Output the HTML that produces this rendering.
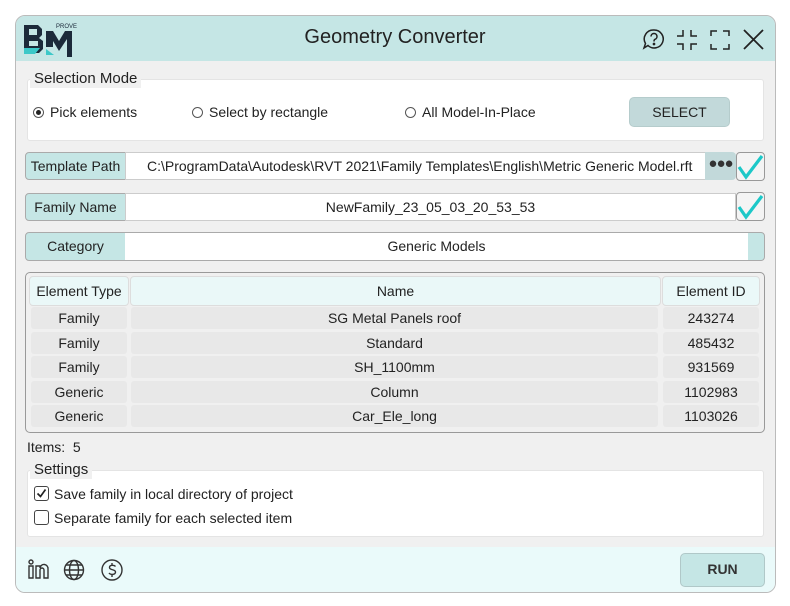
<!DOCTYPE html>
<html><head><style>
*{box-sizing:border-box;margin:0;padding:0}
body{width:790px;height:606px;background:#fff;font-family:"Liberation Sans","DejaVu Sans",sans-serif;font-size:14px;color:#222;position:relative;overflow:hidden}
.a{position:absolute}
.win{left:15px;top:15px;width:761px;height:578px;border:1px solid #bbb;border-radius:10px;background:#f0f0f0;overflow:hidden}
.hdr{left:0;top:0;width:100%;height:45px;background:#c5e6e5}
.ftr{left:0;top:531px;width:100%;height:47px;background:#eafafa}
.box{background:#fff;border:1px solid #e4e4e4;border-radius:3px}
.lbl{background:#c5e6e5;border:1px solid #aaa;border-radius:4px 0 0 4px;text-align:center;line-height:26px;font-size:14px}
.tb{background:#fff;border:1px solid #ccc;text-align:center;line-height:26px;font-size:14px;white-space:nowrap;overflow:hidden}
.chk{background:#f4f4f4;border:1px solid #999;border-radius:4px}
.cell{background:#e8e8e8;border-radius:3px;text-align:center;line-height:22px;font-size:14px}
.hc{background:#eaf8f8;border:1px solid #ddd;border-radius:4px;text-align:center;line-height:28px;font-size:14px}
.radio{width:11px;height:11px;border:1px solid #555;border-radius:50%;background:#fff}
</style></head><body>
<div class="a win">
 <div class="a hdr"></div>
 <div class="a ftr"></div>
</div>
<!-- logo -->
<svg class="a" style="left:22px;top:20px" width="58" height="38" viewBox="0 0 58 38">
 <path d="M2 5h14l4 4v6l-3 3 4 3v8l-4 4H2z" fill="#1c2a3a"/>
 <path d="M7 9h8v6H7zM7 21h9v5H7z" fill="#c5e6e5"/>
 <path d="M2 28h16l-5 6H2z" fill="#3cc8c8"/>
 <path d="M24 11h7l6 10 6-10h7v26h-5V19l-8 12-6-10v6h-7z" fill="#1c2a3a"/>
 <path d="M24 29l8 6h-8z" fill="#3cc8c8"/>
 <text x="34" y="8" font-size="6" fill="#1c2a3a" font-family="Liberation Sans">PROVE</text>
</svg>
<div class="a" style="left:0;width:790px;top:26px;text-align:center;font-size:20px;color:#222">Geometry Converter</div>
<!-- header icons -->
<svg class="a" style="left:642px;top:27px" width="125" height="26" viewBox="0 0 125 26">
 <g fill="none" stroke="#222" stroke-width="1.5">
  <path d="M12 3a9 9 0 1 1-6 15.5L2 21l1.5-4.5A9 9 0 0 1 12 3z"/>
  <path d="M9 9.5a3 3 0 1 1 4 2.8c-1 .4-1 1.2-1 2.2"/><circle cx="12" cy="17" r=".6" fill="#222"/>
  <path d="M41 3v6h-6M49 3v6h6M41 23v-6h-6M49 23v-6h6"/>
  <path d="M69 9V4h6M81 4h6v5M69 17v5h6M81 22h6v-5"/>
  <path d="M102 3l19 19M121 3l-19 19" stroke-width="1.8"/>
 </g>
</svg>
<!-- Selection mode -->
<div class="a box" style="left:27px;top:79px;width:737px;height:62px"></div>
<div class="a" style="left:30px;top:70px;padding:0 4px;background:#f0f0f0;font-size:15px;line-height:18px">Selection Mode</div>
<div class="a" style="left:27px;top:79px;width:737px;height:2px;background:#fff;display:none"></div>
<div class="a radio" style="left:33px;top:107px"></div><div class="a" style="left:36px;top:110px;width:5px;height:5px;border-radius:50%;background:#222"></div>
<div class="a" style="left:50px;top:104px">Pick elements</div>
<div class="a radio" style="left:192px;top:107px"></div><div class="a" style="left:209px;top:104px">Select by rectangle</div>
<div class="a radio" style="left:405px;top:107px"></div><div class="a" style="left:422px;top:104px">All Model-In-Place</div>
<div class="a" style="left:629px;top:97px;width:101px;height:30px;background:#c2d9da;border:1px solid #b5cccc;border-radius:5px;text-align:center;line-height:28px;font-size:14px">SELECT</div>
<!-- Template path -->
<div class="a lbl" style="left:25px;top:152px;width:101px;height:28px">Template Path</div>
<div class="a tb" style="left:125px;top:152px;width:581px;height:28px;text-align:left;padding-left:21px">C:\ProgramData\Autodesk\RVT 2021\Family Templates\English\Metric Generic Model.rft</div>
<div class="a" style="left:705px;top:152px;width:31px;height:28px;background:#c2d9da;border-radius:0 4px 4px 0;text-align:center;line-height:24px;font-size:15px;font-weight:bold;letter-spacing:-1px;color:#333">●●●</div>
<div class="a chk" style="left:736px;top:152px;width:29px;height:29px"></div>
<svg class="a" style="left:736px;top:152px" width="29" height="29"><path d="M3 15l7 10L26 4" fill="none" stroke="#1cc8c8" stroke-width="3.2"/></svg>
<!-- Family name -->
<div class="a lbl" style="left:25px;top:193px;width:101px;height:28px">Family Name</div>
<div class="a tb" style="left:125px;top:193px;width:611px;height:28px">NewFamily_23_05_03_20_53_53</div>
<div class="a chk" style="left:736px;top:192px;width:29px;height:29px"></div>
<svg class="a" style="left:736px;top:192px" width="29" height="29"><path d="M3 15l7 10L26 4" fill="none" stroke="#1cc8c8" stroke-width="3.2"/></svg>
<!-- Category -->
<div class="a lbl" style="left:25px;top:232px;width:740px;height:29px;border-radius:4px"></div>
<div class="a" style="left:26px;top:233px;width:99px;line-height:27px;text-align:center">Category</div>
<div class="a" style="left:125px;top:233px;width:623px;height:27px;background:#fff;text-align:center;line-height:27px">Generic Models</div>
<!-- table -->
<div class="a" style="left:25px;top:272px;width:740px;height:161px;border:1.5px solid #999;border-radius:5px;background:#f0f0f0"></div>
<div class="a hc" style="left:29px;top:276px;width:100px;height:30px">Element Type</div>
<div class="a hc" style="left:130px;top:276px;width:531px;height:30px">Name</div>
<div class="a hc" style="left:662px;top:276px;width:98px;height:30px">Element ID</div>
<div class="a" style="left:31px;top:307px">
 <div class="a cell" style="left:0;top:0;width:96px">Family</div><div class="a cell" style="left:100px;top:0;width:527px">SG Metal Panels roof</div><div class="a cell" style="left:632px;top:0;width:96px">243274</div>
 <div class="a cell" style="left:0;top:24.5px;width:96px">Family</div><div class="a cell" style="left:100px;top:24.5px;width:527px">Standard</div><div class="a cell" style="left:632px;top:24.5px;width:96px">485432</div>
 <div class="a cell" style="left:0;top:49px;width:96px">Family</div><div class="a cell" style="left:100px;top:49px;width:527px">SH_1100mm</div><div class="a cell" style="left:632px;top:49px;width:96px">931569</div>
 <div class="a cell" style="left:0;top:73.5px;width:96px">Generic</div><div class="a cell" style="left:100px;top:73.5px;width:527px">Column</div><div class="a cell" style="left:632px;top:73.5px;width:96px">1102983</div>
 <div class="a cell" style="left:0;top:98px;width:96px">Generic</div><div class="a cell" style="left:100px;top:98px;width:527px">Car_Ele_long</div><div class="a cell" style="left:632px;top:98px;width:96px">1103026</div>
</div>
<div class="a" style="left:27px;top:439px">Items:&nbsp; 5</div>
<!-- settings -->
<div class="a box" style="left:27px;top:470px;width:737px;height:67px"></div>
<div class="a" style="left:30px;top:461px;padding:0 4px;background:#f0f0f0;font-size:15px;line-height:18px">Settings</div>
<div class="a" style="left:34px;top:486px;width:15px;height:15px;border:1px solid #444;border-radius:3px;background:#fff"></div>
<svg class="a" style="left:34px;top:486px" width="15" height="15"><path d="M3.5 7.5l3 3 5-7" fill="none" stroke="#222" stroke-width="1.7"/></svg>
<div class="a" style="left:54px;top:486px">Save family in local directory of project</div>
<div class="a" style="left:34px;top:510px;width:15px;height:15px;border:1px solid #444;border-radius:3px;background:#fff"></div>
<div class="a" style="left:54px;top:510px">Separate family for each selected item</div>
<!-- footer icons -->
<svg class="a" style="left:26px;top:557px" width="105" height="26" viewBox="0 0 105 26">
 <g fill="none" stroke="#333" stroke-width="1.4">
  <circle cx="5" cy="5" r="2"/><path d="M3 9h4v12H3zM10 9h4v2a4 4 0 0 1 8 1v9h-4v-8a1.5 1.5 0 0 0-4 0v8h-4z"/>
  <circle cx="48" cy="13" r="9.5"/><ellipse cx="48" cy="13" rx="4.5" ry="9.5"/><path d="M38.5 13h19M40 8h16M40 18h16"/>
  <circle cx="86" cy="13" r="10"/><path d="M89.5 9.5c-1-1.5-6-2-6 1s6 1.5 6 4.5-5 3-6.5 1M86 6v2.5M86 17.5V20"/>
 </g>
</svg>
<div class="a" style="left:680px;top:553px;width:85px;height:34px;background:#c5e6e5;border:1.5px solid #b0c8c8;border-radius:5px;text-align:center;line-height:31px;font-weight:bold;font-size:14px;color:#333">RUN</div>
</body></html>
